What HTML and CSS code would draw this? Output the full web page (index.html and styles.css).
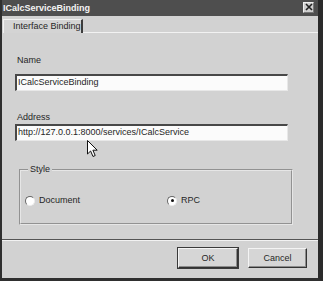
FILE: index.html
```html
<!DOCTYPE html>
<html>
<head>
<meta charset="utf-8">
<link rel="stylesheet" href="styles.css">
</head>
<body>
<div class="dialog">
  <div class="titlebar">
    <span class="title">ICalcServiceBinding</span>
    <span class="close"><svg width="8" height="8" viewBox="0 0 8 8"><path d="M1 1L7 7M7 1L1 7" stroke="#222" stroke-width="1.6"/></svg></span>
  </div>
  <div class="tabs">
    <div class="tab">Interface Binding</div>
    <div class="tab-rest"></div>
  </div>
  <div class="panel">
    <div class="label">Name</div>
    <div class="field">ICalcServiceBinding</div>
    <div class="label addr">Address</div>
    <div class="field near">http://127.0.0.1:8000/services/ICalcService</div>
    <fieldset class="group">
      <legend>Style</legend>
      <div class="radios">
        <div class="radio"><span class="dot"></span>Document</div>
        <div class="radio"><span class="dot on"></span>RPC</div>
      </div>
    </fieldset>
  </div>
  <div class="footer">
    <button class="btn default">OK</button>
    <button class="btn">Cancel</button>
  </div>
  <svg class="cursor" width="12" height="18" viewBox="0 0 12 18"><path d="M0.5 0.5 L0.5 14 L3.6 11 L6 16.5 L8.2 15.5 L5.9 10.2 L10.2 10.2 Z" fill="#fff" stroke="#111" stroke-width="1"/></svg>
</div>
</body>
</html>
```
FILE: styles.css
```css
* { box-sizing: border-box; }
html, body { margin: 0; padding: 0; background: #fff; }
body { width: 323px; height: 285px; overflow: hidden; font-family: "Liberation Sans", Arial, sans-serif; font-size: 9px; color: #262626; }

.dialog {
  position: relative;
  width: 323px;
  height: 281px;
  border-left: 2px solid #2f2f2f;
  border-right: 5px solid #2a2a2a;
  border-bottom: 3px solid #2f2f2f;
  background: #d2d2d2;
  display: flex;
  flex-direction: column;
}

.titlebar {
  height: 16px;
  background: #4e4e4e;
  display: flex;
  align-items: center;
  justify-content: space-between;
  padding: 0 0 1px 1px;
}
.title { color: #f4f4f4; font-weight: bold; font-size: 9px; letter-spacing: 0; }
.close {
  width: 11px;
  height: 11px;
  margin-right: 4px;
  margin-top: -1px;
  background: #cfcfcf;
  border: 1px solid #f0f0f0;
  border-right-color: #777;
  border-bottom-color: #777;
  display: flex;
  align-items: center;
  justify-content: center;
}
.close svg { display: block; }

.tabs {
  height: 17px;
  display: flex;
  align-items: flex-end;
}
.tab {
  height: 14px;
  width: 80px;
  padding-left: 9px;
  line-height: 13px;
  border-top: 1px solid #f2f2f2;
  border-left: 1px solid #f2f2f2;
  border-right: 2px solid #3c3c3c;
  margin-left: 1px;
  background: #d4d4d4;
}
.tab-rest {
  flex: 1;
  height: 2px;
  border-bottom: 1px solid #f2f2f2;
}

.panel {
  flex: 1;
  padding: 0 0 0 13px;
  border-bottom: 1px solid #555;
  display: flex;
  flex-direction: column;
  align-items: flex-start;
}
.label { line-height: 11px; height: 11px; margin-top: 22px; padding-left: 2px; }
.label.addr { margin-top: 21px; }
.field {
  width: 273px;
  height: 17px;
  margin-top: 8px;
  background: #fbfbfb;
  border-top: 2px solid #484848;
  border-left: 2px solid #484848;
  border-right: 1px solid #e8e8e8;
  border-bottom: 1px solid #e8e8e8;
  padding-left: 1px;
  line-height: 13px;
  white-space: nowrap;
}
.field.near { margin-top: 1px; }

.group {
  margin: 23px 0 0 4px;
  width: 274px;
  padding: 0;
  border: 2px groove #e6e6e6;
  min-width: 0;
}
.group legend {
  margin-left: 7px;
  padding: 0 2px;
  line-height: 11px;
}
.radios {
  display: flex;
  margin-top: 20px;
  margin-bottom: 17px;
  padding-left: 4px;
  height: 11px;
  align-items: center;
}
.radio { display: flex; align-items: center; line-height: 11px; }
.radio:first-child { width: 142px; }
.dot {
  width: 10px;
  height: 10px;
  border-radius: 50%;
  background: #fff;
  border: 1px solid #666;
  border-right-color: #ececec;
  border-bottom-color: #ececec;
  margin-right: 4px;
  position: relative;
}
.dot.on::after {
  content: "";
  position: absolute;
  left: 2.5px;
  top: 2.5px;
  width: 3px;
  height: 3px;
  border-radius: 50%;
  background: #111;
}

.footer {
  height: 38px;
  border-top: 1px solid #f2f2f2;
  display: flex;
  justify-content: flex-end;
  align-items: flex-start;
  gap: 10px;
  padding: 7px 11px 0 0;
}
.btn {
  height: 20px;
  width: 59px;
  font-family: "Liberation Sans", Arial, sans-serif;
  font-size: 9px;
  color: #262626;
  background: #d6d6d6;
  border: 1px solid #f4f4f4;
  border-right-color: #333;
  border-bottom-color: #333;
  box-shadow: inset -1px -1px 0 #8c8c8c;
  padding: 0;
}
.btn.default { width: 60px; outline: 1px solid #3a3a3a; outline-offset: 0; }

.cursor { position: absolute; left: 85px; top: 140px; }
```
